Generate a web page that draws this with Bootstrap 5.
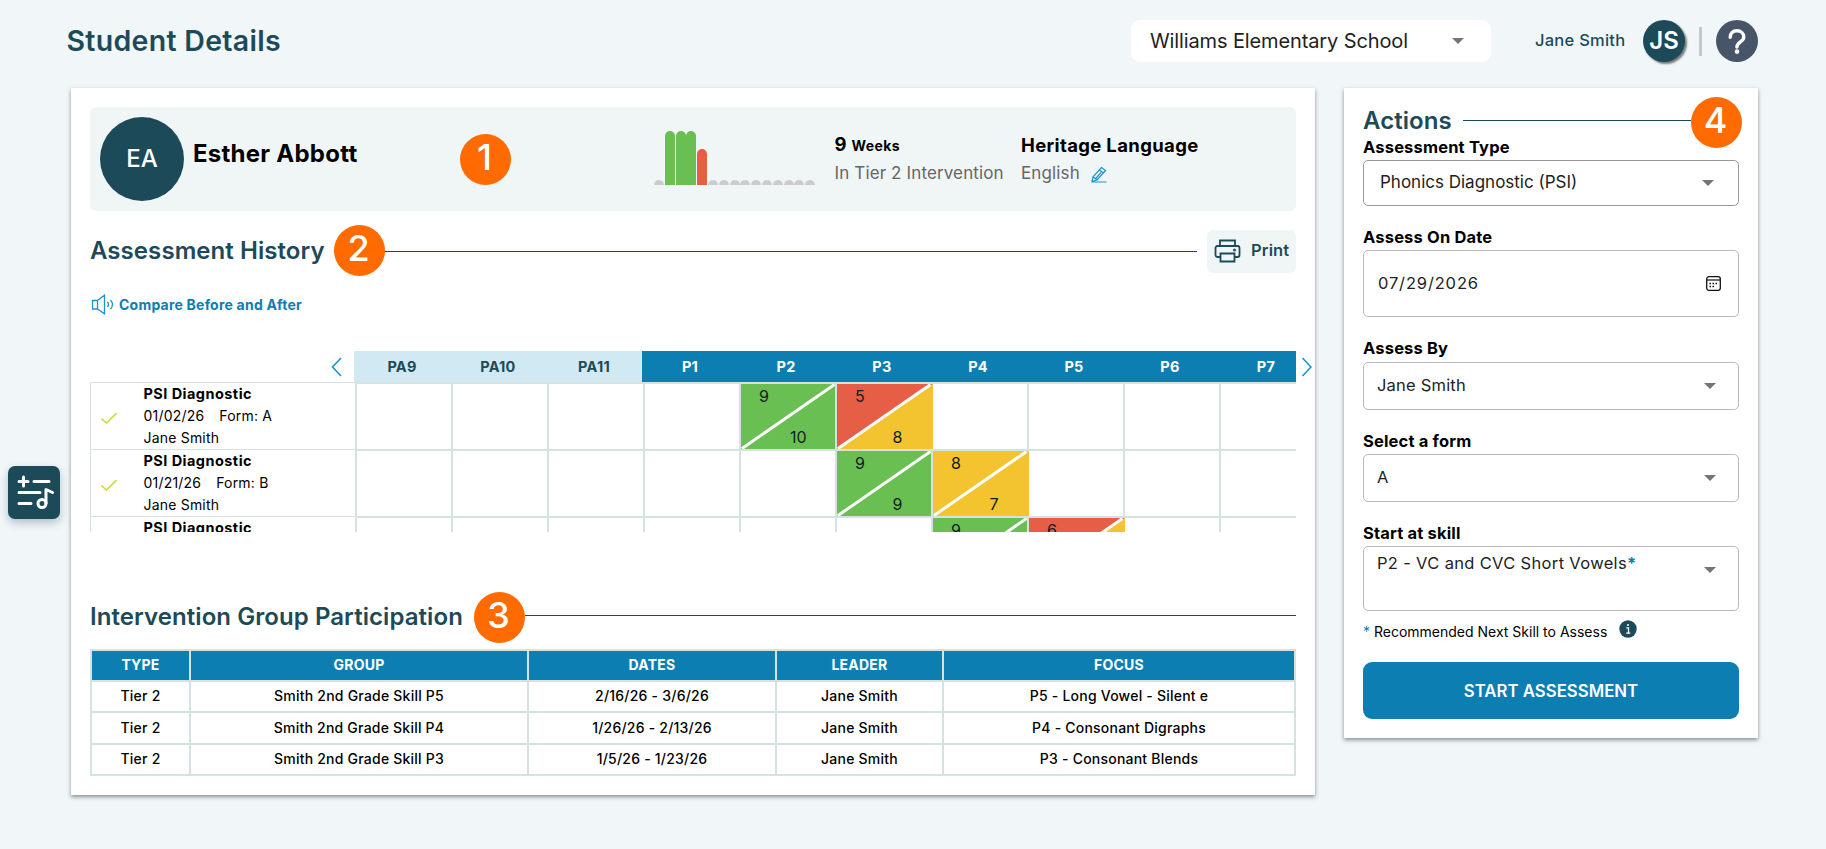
<!DOCTYPE html>
<html lang="en">
<head>
<meta charset="utf-8">
<title>Student Details</title>
<link href="https://cdn.jsdelivr.net/npm/bootstrap@5.3.0/dist/css/bootstrap.min.css" rel="stylesheet">
<style>
body{background:#f1f6f9;font-family:Inter,sans-serif;color:#000;height:849px;overflow:hidden;position:relative}
.navy{color:#1d4a59}
.topbar{height:88px;padding:20px 68px 26px 66.500px}
.page-title{font-size:28.5px;letter-spacing:.3px;font-weight:600;line-height:42px;margin:0}
.school{width:360px;height:42px;border-radius:9px;background:#fff;padding:0 27px 0 19px;font-size:20px;letter-spacing:-.12px;color:#222}
.caret{width:0;height:0;border:6px solid transparent;border-top-color:#757575;border-bottom:0}
.uname{font-size:16.5px;letter-spacing:.25px;font-weight:500;margin-left:44px;width:90px;white-space:nowrap;padding-bottom:2px}
.js{width:42px;height:42px;background:#1d4a59;color:#fff;font-size:24px;font-weight:600;box-shadow:2px 2px 2px rgba(0,0,0,.5);margin-left:18px}
.vbar{width:3px;height:29px;background:#c3c8cb;margin:0 14px}
.sheet{background:#fff;box-shadow:0 2px 4px rgba(30,45,45,.5);padding:19px;position:relative}
.main-sheet{width:1244px;height:707px;margin-left:71px}
.side-sheet{width:414px;height:650px;margin-left:29px}
.profile{height:104px;background:#f0f6f6;border-radius:6px;padding-left:10px}
.avatar{width:84px;height:84px;background:#1d4a59;color:#fff;font-size:24px;font-weight:500}
.stud{font-size:24px;letter-spacing:.25px;font-weight:700;width:267px;margin-left:9px;margin-top:-10px;white-space:nowrap}
.num{width:51px;height:51px;flex:none;background:#ff6b00;color:#fff;font-size:36px;font-weight:500;line-height:46px;text-align:center;text-indent:-2px;border-radius:50%;z-index:2}
.bars{width:162px;height:54px;gap:.8px;margin-left:143px;margin-top:-2px}
.bars i{width:10px;height:5px;border-radius:5px 5px 0 0;background:#ccc;flex:none}
.bars .g{background:#69bf52;height:54px}
.bars .r{background:#e75e46;height:36px}
.fact{white-space:nowrap;font-size:17px;letter-spacing:.13px;color:#666}
.fact div{height:28px;line-height:28px;display:flex;align-items:center}
.fact b{font-size:18.5px;letter-spacing:.35px;font-weight:700;color:#000}
.fact b small{font-size:14px}
.weeks{margin-left:18.500px;width:186.500px}
.sec{font-size:24px;letter-spacing:.07px;font-weight:600;color:#1d4a59;white-space:nowrap;line-height:28px;padding-bottom:2px}
.rule{height:1px;background:#1d4a59;flex:1}
.print{width:89px;height:43px;background:#f0f6f6;border-radius:6px;margin-left:10px;font-size:16.5px;letter-spacing:.15px;font-weight:600;padding:0 0 2px 7px;white-space:nowrap}
.compare{height:22px;margin-top:21px;font-size:14px;letter-spacing:.22px;font-weight:700;color:#0d7eb1;padding-bottom:1px}
.history{height:181px;margin-top:35px;position:relative}
.hd{height:31px}
.hd .sp{width:264px;flex:none;padding-right:12px}
.hd .cols,.cells{overflow:hidden}
.hd .c{width:96px;flex:none;text-align:center;line-height:31px;font-size:14.5px;letter-spacing:.25px;font-weight:700;background:#0d7eb1;color:#fff}
.hd .c.pa{background:#d0e9f3;color:#1d4a59}
.next{position:absolute;left:1211px;top:6px}
.rows{height:150px;overflow:hidden}
.hrow{height:67px;flex:none}
.info{width:265px;flex:none;border-left:1px solid #d5e2e2;border-top:1px solid #d5e2e2;padding-left:10px;font-size:14px;letter-spacing:.2px;line-height:22px}
.info .tx{margin-left:26.500px}
.info b{font-weight:700;font-size:14.5px;letter-spacing:.45px}
.cells{width:941px;border-top:2px solid #d5e2e2}
.cell{width:96px;height:65px;flex:none;border-left:2px solid #d5e2e2;position:relative}
.cell svg{display:block;overflow:visible}
.cell span{position:absolute;font-size:16px;line-height:16px;color:#111c22}
.cell .a{left:18px;top:4px}.cell .z{right:28.500px;top:45px}
.cell.wide{z-index:1}
.grp{width:1206px;border-collapse:collapse;table-layout:fixed;margin-top:19px;font-size:14px;letter-spacing:.22px;font-weight:500;text-align:center}
.grp td,.grp th{border:2px solid #d5e2e2;padding:0 0 2px;height:31px;line-height:20px}
.grp tr:nth-child(3) td{height:32px;padding-bottom:0}
.grp th{background:#0d7eb1;color:#fff;font-weight:700}
.lab{height:26px;line-height:26px;font-size:16.5px;letter-spacing:.17px;font-weight:700;margin-top:18px}
.box{border:1px solid #b9b9b9;border-radius:5px;padding:0 22px 0 13px;font-size:16.5px;letter-spacing:.2px;color:#222;height:48px;white-space:nowrap}
.box span{padding-bottom:1px}
.box-type{height:46px;padding:0 24px 0 16px;font-size:17px;letter-spacing:0;border-color:#999}
.box-type span{padding-bottom:0}
.box-date{height:67px;padding-right:17px;letter-spacing:.85px}
.box-date span{padding-bottom:0;padding-left:1px}
.box-skill{height:65px;letter-spacing:.33px}
.start{height:57px;background:#0d7eb1;border-radius:9px;color:#fff;font-size:16.800px;font-weight:600;width:100%;border:0;padding:3px 0 0}
.rec{height:51px;font-size:14px;padding-bottom:11px}
.tool{position:absolute;left:8px;top:466px;width:52px;height:53px;background:#1d4a59;border-radius:7px;box-shadow:0 4px 8px rgba(29,74,89,.3)}
.st{color:#0d7eb1}
</style>
</head>
<body>
<header class="topbar d-flex align-items-center">
  <h1 class="page-title navy me-auto">Student Details</h1>
  <div class="school d-flex align-items-center justify-content-between"><span>Williams Elementary School</span><i class="caret"></i></div>
  <div class="uname navy">Jane Smith</div>
  <div class="js rounded-circle d-flex align-items-center justify-content-center">JS</div>
  <div class="vbar"></div>
  <svg width="42" height="42" viewBox="0 0 42 42"><circle cx="21" cy="21" r="21" fill="#475569"/><path d="M14.2 17.2c0-4 2.900-6.400 6.700-6.400s6.900 2.400 6.900 6.100c0 5-6.900 4.900-6.900 10.100" fill="none" stroke="#fff" stroke-width="3.400" stroke-linecap="round"/><circle cx="21" cy="31.600" r="2.300" fill="#fff"/></svg>
</header>
<div class="d-flex align-items-start">
<main class="sheet main-sheet">
  <section class="profile d-flex align-items-center">
    <div class="avatar rounded-circle d-flex align-items-center justify-content-center">EA</div>
    <div class="stud">Esther Abbott</div>
    <div class="num">1</div>
    <div class="bars d-flex align-items-end"><i></i><i class="g"></i><i class="g"></i><i class="g"></i><i class="r"></i><i></i><i></i><i></i><i></i><i></i><i></i><i></i><i></i><i></i><i></i></div>
    <div class="fact weeks"><div><b>9 <small>Weeks</small></b></div><div>In Tier 2 Intervention</div></div>
    <div class="fact"><div><b>Heritage Language</b></div><div>English <svg style="margin:2px 0 0 11px" width="17" height="17" viewBox="0 0 17 17" fill="none" stroke="#1b93cc" stroke-width="1.200"><path d="M1 15.500l1-4.700L10.500 1.500l4 3L6 14zM8.500 4l4 3.300M2 10.800L6 14M4.800 12.500l5.200-6.200M1 16h14.500"/></svg></div></div>
  </section>
  <div class="d-flex align-items-center" style="height:43px;margin-top:19px">
    <span class="sec">Assessment History</span><span class="num ms-auto" style="margin-top:-2px">2</span><span class="rule" style="flex:0 0 812px"></span>
    <div class="print navy d-flex align-items-center"><svg width="27" height="24" viewBox="0 0 27 24" fill="none" stroke="#1d4a59" stroke-width="1.800"><path d="M6 7V1.500h15V7M6 18H3.500a2 2 0 0 1-2-2V9a2 2 0 0 1 2-2h20a2 2 0 0 1 2 2v7a2 2 0 0 1-2 2H21M6.500 14.500h14v8h-14z"/><circle cx="20.500" cy="11" r=".6"/></svg><span style="margin-left:10px">Print</span></div>
  </div>
  <div class="compare d-flex align-items-center"><svg width="24" height="21" viewBox="0 0 24 21" fill="none" stroke="#1b93cc" stroke-width="1.300"><path d="M7.500 6.500H2.500v8.500h5M7.500 5.800v9.700M7.500 6.500L14.500 1.200v18.600L7.500 15M17.500 8q2 2.500 0 5M20.500 6q4 4.500 0 9"/></svg><span style="margin-left:5px">Compare Before and After</span></div>
  <section class="history">
    <div class="hd d-flex">
      <div class="sp d-flex align-items-center justify-content-end"><svg width="11" height="20" viewBox="0 0 11 20" fill="none" stroke="#1b93cc" stroke-width="1.600"><path d="M10 1L1.500 10l8.500 9"/></svg></div>
      <div class="cols d-flex flex-fill" id="heads"></div>
    </div>
    <svg class="next" width="11" height="20" viewBox="0 0 11 20" fill="none" stroke="#1b93cc" stroke-width="1.600"><path d="M1.500 1L10 10l-8.500 9"/></svg>
    <div class="rows" id="rows"></div>
  </section>
  <div class="d-flex align-items-center" style="height:30px;margin-top:68px">
    <span class="sec pb-0 pt-1">Intervention Group Participation</span><span class="num ms-auto" style="margin-top:4px">3</span><span class="rule" style="flex:0 0 771px"></span>
  </div>
  <table class="grp">
    <colgroup><col style="width:99px"><col style="width:338px"><col style="width:248px"><col style="width:167px"><col></colgroup>
    <tr><th>TYPE</th><th>GROUP</th><th>DATES</th><th>LEADER</th><th>FOCUS</th></tr>
    <tr><td>Tier 2</td><td>Smith 2nd Grade Skill P5</td><td>2/16/26 - 3/6/26</td><td>Jane Smith</td><td>P5 - Long Vowel - Silent e</td></tr>
    <tr><td>Tier 2</td><td>Smith 2nd Grade Skill P4</td><td>1/26/26 - 2/13/26</td><td>Jane Smith</td><td>P4 - Consonant Digraphs</td></tr>
    <tr><td>Tier 2</td><td>Smith 2nd Grade Skill P3</td><td>1/5/26 - 1/23/26</td><td>Jane Smith</td><td>P3 - Consonant Blends</td></tr>
  </table>
</main>
<aside class="sheet side-sheet">
  <div class="d-flex align-items-center" style="height:27px"><span class="sec pb-0" style="width:100px">Actions</span><span class="rule"></span><span class="num" style="margin:3px -3px 0 0">4</span></div>
  <div class="lab mt-0">Assessment Type</div>
  <div class="box box-type d-flex align-items-center justify-content-between"><span>Phonics Diagnostic (PSI)</span><i class="caret"></i></div>
  <div class="lab">Assess On Date</div>
  <div class="box box-date d-flex align-items-center justify-content-between"><span>07/29/2026</span><svg width="15" height="15" viewBox="0 0 15 15"><rect x=".7" y=".7" width="13.600" height="13.600" rx="2.200" fill="none" stroke="#111" stroke-width="1.300"/><path d="M1 4h13" stroke="#111" stroke-width="1.200"/><path d="M3.500 7.500h9M3.500 10.500h6" stroke="#111" stroke-width="1.500" stroke-dasharray="1.500 1.500"/></svg></div>
  <div class="lab" style="margin-top:18px;margin-bottom:1px">Assess By</div>
  <div class="box d-flex align-items-center justify-content-between"><span>Jane Smith</span><i class="caret"></i></div>
  <div class="lab">Select a form</div>
  <div class="box d-flex align-items-center justify-content-between"><span>A</span><i class="caret"></i></div>
  <div class="lab">Start at skill</div>
  <div class="box box-skill d-flex align-items-start justify-content-between"><span style="line-height:32px">P2 - VC and CVC Short Vowels<b class="st">*</b></span><i class="caret" style="margin-top:20px"></i></div>
  <div class="rec d-flex align-items-center"><span><span class="st">*</span> Recommended Next Skill to Assess</span><svg style="margin:-4px 0 0 12px" width="18" height="18" viewBox="0 0 18 18"><circle cx="9" cy="9" r="8.700" fill="#1d4a59"/><path d="M7.300 7.800h2.200v5.200M7.200 13.200h4" stroke="#fff" stroke-width="1.300" fill="none"/><circle cx="9" cy="5" r="1" fill="#fff"/></svg></div>
  <button class="start">START ASSESSMENT</button>
</aside>
</div>
<div class="tool"><svg width="52" height="53" viewBox="0 0 52 53" fill="none" stroke="#fff" stroke-width="3" stroke-linecap="round"><path d="M11 15.500h9M15.500 11v9M26 15.500h15M11 26.500h21M11 37.500h12"/><circle cx="34" cy="37.500" r="4"/><path d="M38 37V23.500l6.500 3" stroke-linejoin="round"/></svg></div>
<script>
const heads=['PA9','PA10','PA11','P1','P2','P3','P4','P5','P6','P7'];
document.getElementById('heads').innerHTML=heads.map(h=>`<div class="c ${h.startsWith('PA')?'pa':''}">${h}</div>`).join('');
const G='#69bf52',R='#e75e46',Y='#f4c430';
const data=[
 {d:'01/02/26',f:'A',s:{4:[9,10,G,G],5:[5,8,R,Y]}},
 {d:'01/21/26',f:'B',s:{5:[9,9,G,G],6:[8,7,Y,Y]}},
 {d:'',f:'',s:{6:[9,'',G,G],7:[6,'',R,Y]}}];
document.getElementById('rows').innerHTML=data.map(r=>`<div class="hrow d-flex"><div class="info d-flex"><svg width="16" height="12" viewBox="0 0 16 12" style="margin-top:29px" fill="none" stroke="#cbdc38" stroke-width="1.600"><path d="M.5 6.500L5.500 11l10-10"/></svg><div class="tx"><b>PSI Diagnostic</b>${r.d?`<br>${r.d}<span style="margin-left:15px">Form: ${r.f}</span><br>Jane Smith`:''}</div></div><div class="cells d-flex">${heads.map((h,i)=>{const s=r.s[i];if(!s)return '<div class="cell"></div>';const w=r.s[i+1]?94:96;return `<div class="cell ${w===96?'wide':''}"><svg width="${w}" height="65" viewBox="0 0 ${w} 65"><path d="M0 0H${w}L0 65z" fill="${s[2]}"/><path d="M${w} 0V65H0z" fill="${s[3]}"/><path d="M1 64.500L93.500 .5" stroke="#fff" stroke-width="3"/></svg><span class="a">${s[0]}</span><span class="z">${s[1]}</span></div>`}).join('')}</div></div>`).join('');
</script>
<script src="https://cdn.jsdelivr.net/npm/bootstrap@5.3.0/dist/js/bootstrap.bundle.min.js"></script>
</body>
</html>
